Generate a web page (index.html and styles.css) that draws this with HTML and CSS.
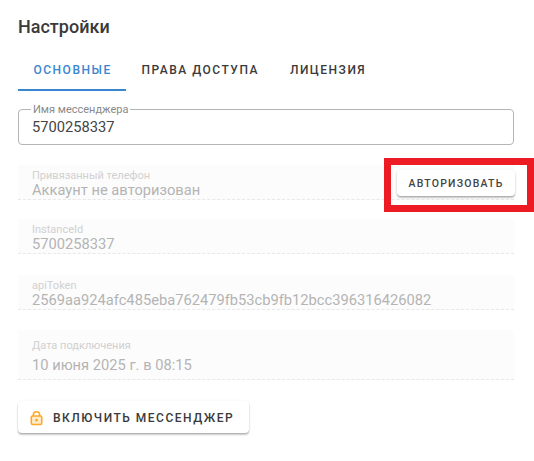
FILE: index.html
```html
<!DOCTYPE html>
<html lang="ru">
<head>
<meta charset="utf-8">
<title>Настройки</title>
<link rel="stylesheet" href="styles.css">
</head>
<body>
<main class="page">
  <h1 class="title">Настройки</h1>
  <nav class="tabs">
    <a class="tab tab-active">Основные</a>
    <a class="tab">Права доступа</a>
    <a class="tab">Лицензия</a>
  </nav>
  <fieldset class="outlined">
    <legend class="outlined-legend">Имя мессенджера</legend>
    <div class="outlined-value">5700258337</div>
  </fieldset>
  <div class="field field-phone">
    <div class="field-text">
      <div class="field-label">Привязанный телефон</div>
      <div class="field-value">Аккаунт не авторизован</div>
    </div>
  </div>
  <div class="field field-instance">
    <div class="field-text">
      <div class="field-label">InstanceId</div>
      <div class="field-value">5700258337</div>
    </div>
  </div>
  <div class="field field-token">
    <div class="field-text">
      <div class="field-label">apiToken</div>
      <div class="field-value">2569aa924afc485eba762479fb53cb9fb12bcc396316426082</div>
    </div>
  </div>
  <div class="field field-date">
    <div class="field-text">
      <div class="field-label">Дата подключения</div>
      <div class="field-value">10 июня 2025 г. в 08:15</div>
    </div>
  </div>
  <button class="btn btn-enable">
    <svg class="lock" viewBox="0 0 24 24" width="19" height="19"><path fill="none" stroke="#ffa726" stroke-width="2" d="M8 10V8.8a4 4 0 0 1 8 0V10"/><rect x="5.4" y="10" width="13.2" height="10.8" rx="1.8" fill="#ffeccc" stroke="#ffa726" stroke-width="2"/><circle cx="12" cy="15.4" r="1.7" fill="#ffa726"/></svg>
    Включить мессенджер
  </button>
</main>
<div class="highlight"><button class="btn btn-auth">Авторизовать</button></div>
</body>
</html>
```
FILE: styles.css
```css
* { box-sizing: border-box; }
html, body { margin: 0; height: 100%; background: #fff; overflow: hidden; }
body { font-family: Roboto, sans-serif; color: #333; }
.page { padding: 16px 20px 0 18px; display: flex; flex-direction: column; align-items: stretch; }
.title { margin: 0; font-size: 18px; line-height: 21px; font-weight: 500; color: #3a3a3a; }
.tabs { display: flex; margin-top: 16px; height: 38px; }
.tab { padding: 0 15.5px; line-height: 34px; font-size: 12px; font-weight: 500; letter-spacing: 1.5px; text-transform: uppercase; color: #3a3a3a; white-space: nowrap; }
.tab-active { color: #3b86d1; border-bottom: 2px solid #3b86d1; width: 108px; }
.outlined { margin: 13px 0 0; padding: 0 13px; height: 41px; border: 1px solid #b5b5b5; border-radius: 4px; min-width: 0; }
.outlined-legend { padding: 0 2px; margin-left: -1px; font-size: 11px; line-height: 11px; color: #8a8a8a; }
.outlined-value { font-size: 14.7px; line-height: 20px; margin-top: 2px; color: #444; }
.field { height: 35px; background: #fcfcfc; border-bottom: 1px dashed #e8e8e8; padding: 4px 14px 0; }
.field-phone { margin-top: 20px; }
.field-instance { margin-top: 19px; }
.field-token { margin-top: 21px; }
.field-date { height: 50px; margin-top: 20px; padding-top: 9px; }
.field-label { font-size: 11px; line-height: 13px; color: #d0d0d0; }
.field-value { font-size: 14.7px; line-height: 17px; color: #b4b4b4; white-space: nowrap; }
.field-date .field-value { margin-top: 5px; }
.btn { font-family: Roboto, sans-serif; border: 0; background: #fff; border-radius: 4px; text-transform: uppercase; font-weight: 500; color: #3a3a3a; box-shadow: 0 1px 1px rgba(0,0,0,.12), 0 2px 2px rgba(0,0,0,.2), 0 0 3px rgba(0,0,0,.06); }
.btn-enable { margin-top: 21px; align-self: flex-start; width: 231px; height: 32px; padding: 1px 0 0 9px; display: flex; align-items: center; gap: 7px; font-size: 12px; letter-spacing: 1.5px; }
.lock { flex: none; }
.highlight { position: absolute; left: 384px; top: 158px; width: 150px; height: 54px; border: 7px solid #ed1c24; display: flex; justify-content: flex-end; align-items: center; padding: 0 12px 4px 0; }
.btn-auth { width: 118px; height: 26px; padding: 0; font-size: 10.5px; letter-spacing: 1.2px; color: #444; }
```
